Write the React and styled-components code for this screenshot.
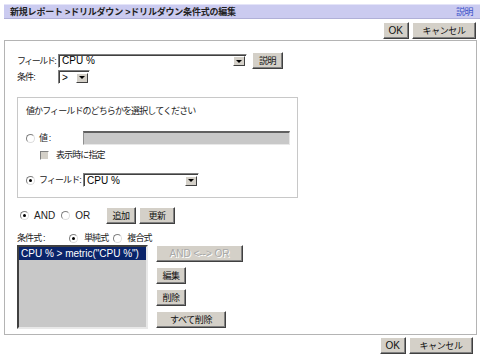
import React from 'react';
import styled, { createGlobalStyle } from 'styled-components';

const GlobalStyle = createGlobalStyle`
  html, body {
    margin: 0;
    padding: 0;
    background: #fff;
  }
  body {
    font-family: "Liberation Sans", "Noto Sans CJK JP", sans-serif;
    font-size: 10px;
    line-height: 12px;
    color: #000;
  }
`;

const Page = styled.div`
  width: 476px;
  padding: 4px 4px 0 4px;
  display: flex;
  flex-direction: column;
`;

const Header = styled.div`
  height: 15px;
  background: #cbcbf0;
  border-top: 1px solid #e4e4f8;
  border-bottom: 1px solid #b0b0d8;
  box-sizing: border-box;
  display: flex;
  align-items: center;
  justify-content: space-between;
  padding: 0 7px 0 6px;
`;

const Title = styled.span`
  font-weight: bold;
  font-size: 9px;
  letter-spacing: -0.2px;
  color: #222;
`;

const HelpLink = styled.span`
  color: #3a50c8;
  font-size: 9px;
  letter-spacing: -0.5px;
`;

const ButtonBar = styled.div`
  display: flex;
  justify-content: flex-end;
  gap: 3px;
  padding-right: ${p => p.$right || 5}px;
  margin-top: ${p => p.$mt || 3}px;
`;

const Btn = styled.button`
  height: 17px;
  min-width: ${p => p.$w || 0}px;
  margin-left: ${p => p.$ml || 0}px;
  padding: 0 5px;
  box-sizing: border-box;
  background: #d4d0c8;
  border: 1px solid;
  border-color: #fff #404040 #404040 #fff;
  box-shadow: inset -1px -1px 0 #808080;
  font-family: "Liberation Sans", "Noto Sans CJK JP", sans-serif;
  font-size: ${p => (p.$latin ? 10 : 9)}px;
  letter-spacing: ${p => (p.$latin ? 0 : -0.4)}px;
  line-height: 12px;
  color: ${p => (p.disabled ? '#a8a8a8' : '#111')};
  text-shadow: ${p => (p.disabled ? '1px 1px 0 #fff' : 'none')};
  display: flex;
  align-items: center;
  justify-content: center;
  white-space: nowrap;
`;

const Panel = styled.div`
  margin-top: 1px;
  border: 1px solid #b4b4b4;
  width: 473px;
  height: 295px;
  box-sizing: border-box;
  padding: 11px 12px 0 12px;
  display: flex;
  flex-direction: column;
`;

const Row = styled.div`
  display: flex;
  align-items: center;
  margin-top: ${p => p.$mt || 0}px;
  padding-left: ${p => p.$pl || 0}px;
`;

const Label = styled.span`
  width: ${p => (p.$w ? `${p.$w}px` : 'auto')};
  margin-right: ${p => p.$mr || 0}px;
  flex-shrink: 0;
  white-space: nowrap;
  color: #222;
  font-size: ${p => (p.$latin ? 10 : 9)}px;
  letter-spacing: ${p => (p.$latin ? 0 : p.$tight ? -1.5 : -0.9)}px;
  line-height: 12px;
`;

const SelectBox = styled.div`
  width: ${p => p.$w}px;
  height: 14px;
  box-sizing: border-box;
  background: #fff;
  border: 1px solid;
  border-color: #808080 #fff #fff #808080;
  box-shadow: inset 1px 1px 0 #404040;
  display: flex;
  align-items: center;
  justify-content: space-between;
  padding: 1px 1px 0 3px;
  font-size: 10px;
`;

const Arrow = styled.span`
  width: 12px;
  height: 10px;
  background: #d4d0c8;
  border: 1px solid;
  border-color: #fff #404040 #404040 #fff;
  box-sizing: border-box;
  display: flex;
  align-items: center;
  justify-content: center;
  &::after {
    content: '';
    border-left: 3px solid transparent;
    border-right: 3px solid transparent;
    border-top: 3px solid #000;
  }
`;

const Choice = styled.div`
  margin-top: 13px;
  width: 281px;
  height: 101px;
  box-sizing: border-box;
  border: 1px solid #c8c8c8;
  padding: 7px 6px 0 8px;
  display: flex;
  flex-direction: column;
`;

const Radio = styled.span`
  width: 9px;
  height: 9px;
  border-radius: 50%;
  box-sizing: border-box;
  border: 1px solid #808080;
  border-right-color: #ddd;
  border-bottom-color: #ddd;
  background: #fff;
  display: inline-flex;
  align-items: center;
  justify-content: center;
  flex-shrink: 0;
  margin-left: ${p => p.$ml || 0}px;
  margin-right: ${p => p.$mr || 4}px;
  &::after {
    content: '';
    width: 3px;
    height: 3px;
    border-radius: 50%;
    background: ${p => (p.$on ? '#000' : 'transparent')};
  }
`;

const Check = styled.span`
  width: 9px;
  height: 9px;
  box-sizing: border-box;
  border: 1px solid;
  border-color: #808080 #fff #fff #808080;
  background: #d4d0c8;
  margin-right: 7px;
  flex-shrink: 0;
`;

const GreyInput = styled.div`
  width: 207px;
  height: 14px;
  box-sizing: border-box;
  background: #c8c8c8;
  border-top: 2px solid #606060;
  border-left: 1px solid #909090;
  border-right: 1px solid #e8e8e8;
  border-bottom: 1px solid #e8e8e8;
`;

const ExprArea = styled.div`
  display: flex;
  gap: 8px;
  margin-top: 1px;
`;

const ListBox = styled.div`
  width: 131px;
  height: 84px;
  box-sizing: border-box;
  background: #c8c8c8;
  border: 2px solid;
  border-color: #404040 #e8e8e8 #e8e8e8 #404040;
`;

const ListItem = styled.div`
  background: #0a246a;
  color: #fff;
  height: 13px;
  line-height: 13px;
  padding-left: 2px;
  white-space: nowrap;
  font-size: 10px;
`;

const SideButtons = styled.div`
  display: flex;
  flex-direction: column;
  align-items: flex-start;
  gap: 5px;
`;

const Select = ({ w, value }) => (
  <SelectBox $w={w}>
    <span>{value}</span>
    <Arrow />
  </SelectBox>
);

export default function App() {
  return (
    <>
      <GlobalStyle />
      <Page>
        <Header>
          <Title>新規レポート &gt;ドリルダウン &gt;ドリルダウン条件式の編集</Title>
          <HelpLink>説明</HelpLink>
        </Header>
        <ButtonBar $right={4}>
          <Btn $w={22} $latin>OK</Btn>
          <Btn $w={64}>キャンセル</Btn>
        </ButtonBar>

        <Panel>
          <Row>
            <Label $w={41} $tight>フィールド:</Label>
            <Select w={189} value="CPU %" />
            <Btn $w={31} $ml={5}>説明</Btn>
          </Row>
          <Row $mt={1}>
            <Label $w={41}>条件:</Label>
            <Select w={32} value=">" />
          </Row>

          <Choice>
            <Label>値かフィールドのどちらかを選択してください</Label>
            <Row $mt={14}>
              <Radio />
              <Label $w={44}>値 :</Label>
              <GreyInput />
            </Row>
            <Row $mt={4} $pl={14}>
              <Check />
              <Label>表示時に指定</Label>
            </Row>
            <Row $mt={12}>
              <Radio $on />
              <Label $w={44}>フィールド:</Label>
              <Select w={116} value="CPU %" />
            </Row>
          </Choice>

          <Row $mt={9}>
            <Radio $on $mr={5} $ml={3} />
            <Label $latin $mr={6}>AND</Label>
            <Radio $mr={5} />
            <Label $latin $mr={16}>OR</Label>
            <Btn $w={30}>追加</Btn>
            <Btn $w={36} $ml={3}>更新</Btn>
          </Row>

          <Row $mt={8}>
            <Label $w={52}>条件式 :</Label>
            <Radio $on $mr={6} />
            <Label $mr={5}>単純式</Label>
            <Radio $mr={5} />
            <Label>複合式</Label>
          </Row>

          <ExprArea>
            <ListBox>
              <ListItem>CPU % &gt; metric("CPU %")</ListItem>
            </ListBox>
            <SideButtons>
              <Btn $w={87} $latin disabled>AND &lt;--&gt; OR</Btn>
              <Btn $w={30}>編集</Btn>
              <Btn $w={30}>削除</Btn>
              <Btn $w={70}>すべて削除</Btn>
            </SideButtons>
          </ExprArea>
        </Panel>

        <ButtonBar $right={7} $mt={2}>
          <Btn $w={22} $latin>OK</Btn>
          <Btn $w={64}>キャンセル</Btn>
        </ButtonBar>
      </Page>
    </>
  );
}
